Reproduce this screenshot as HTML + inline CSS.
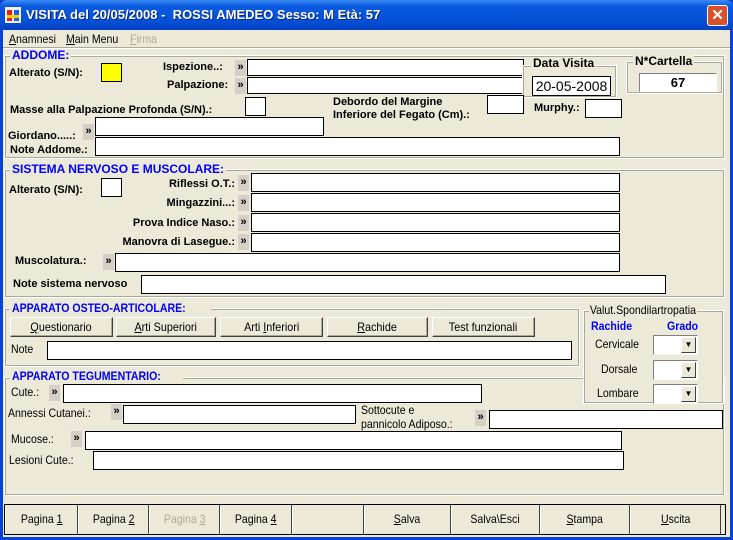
<!DOCTYPE html>
<html><head><meta charset="utf-8"><style>
*{box-sizing:border-box;margin:0;padding:0}
body{width:733px;height:540px;background:#0842d8;position:relative;overflow:hidden;font-family:"Liberation Sans",Arial,sans-serif}
#title{position:absolute;left:0;top:0;width:733px;height:30px;background:linear-gradient(#3b8cf5,#0a5ae0 20%,#0550d8 70%,#0340c0);border-radius:7px 7px 0 0}
#title span{position:absolute;left:26px;top:7px;color:#fff;font-weight:bold;font-size:13px;text-shadow:1px 1px #0a2a80}
#close{position:absolute;left:707px;top:5px;width:21px;height:21px;background:#d8502c;border:1px solid #fff;border-radius:3px;color:#fff;font-size:15px;font-weight:bold;text-align:center;line-height:19px}
#client{position:absolute;left:3px;top:30px;width:727px;height:507px;background:#ece9d8}
.a{position:absolute}
.l{position:absolute;font-size:11px;font-weight:bold;color:#000;white-space:nowrap;line-height:13px}
.n{position:absolute;font-size:12px;color:#000;white-space:nowrap;line-height:14px;transform:scaleX(.88);transform-origin:left}
.r{text-align:right}
.i{position:absolute;background:#fff;border:1px solid #000;height:18px}
.ar{position:absolute;width:11px;height:16px;background:#d4d0c8;font-size:11px;font-weight:bold;line-height:15px;text-align:center}
.g{position:absolute;border:1px solid #fff;outline:1px solid #aca899;outline-offset:-2px}
.gt{position:absolute;font-size:12px;font-weight:bold;color:#0000ff;background:#ece9d8;padding:0 2px;line-height:13px;white-space:nowrap}
.b{position:absolute;height:20px;background:#ece9d8;border:1px solid;border-color:#fff #404040 #404040 #fff;box-shadow:inset -1px -1px #aca899;font-size:12px;text-align:center;line-height:18px}
.b span{display:inline-block;transform:scaleX(.9)}
.pb{position:absolute;top:475px;height:29px;border-right:1px solid #404040;border-left:1px solid #fff;font-size:12px;text-align:center;line-height:28px}
.pb span{display:inline-block;transform:scaleX(.88)}
.cb{position:absolute;width:45px;height:20px;background:#fff;border:1px solid;border-color:#808080 #fff #fff #808080;z-index:3}
.cb i{position:absolute;right:1px;top:1px;width:15px;height:16px;background:#ece9d8;border:1px solid;border-color:#fff #404040 #404040 #fff;font-style:normal;font-size:8px;text-align:center;line-height:14px}
.z{z-index:3}
</style></head><body>
<div id="title"><svg class="a" style="left:5px;top:7px" width="16" height="16"><rect width="16" height="16" fill="#eee"/><rect x="2" y="3" width="5" height="11" fill="#e02020"/><rect x="9" y="3" width="5" height="11" fill="#2060e0"/><rect x="2" y="8" width="12" height="3" fill="#f0d000"/></svg><span>VISITA del 20/05/2008 -&nbsp; ROSSI AMEDEO Sesso: M Età: 57</span><div id="close">✕</div></div>
<div id="client">
<div class="n" style="left:6px;top:2px"><u>A</u>namnesi</div>
<div class="n" style="left:63px;top:2px"><u>M</u>ain Menu</div>
<div class="n" style="left:127px;top:2px;color:#aca899"><u>F</u>irma</div>
<div class="a" style="left:0;top:17px;width:727px;height:2px;border-top:1px solid #aca899;border-bottom:1px solid #fff"></div>

<div class="g" style="left:1px;top:25px;width:721px;height:104px"></div>
<div class="gt" style="left:7px;top:19px">ADDOME:</div>
<div class="l" style="left:6px;top:37px">Alterato (S/N):</div>
<div class="i" style="left:98px;top:33px;width:21px;height:19px;background:#ffff00"></div>
<div class="l" style="left:160px;top:31px">Ispezione..:</div><div class="ar" style="left:232px;top:30px">»</div><div class="i" style="left:244px;top:29px;width:277px;height:17px"></div>
<div class="l" style="left:164px;top:49px">Palpazione:</div><div class="ar" style="left:232px;top:48px">»</div><div class="i" style="left:244px;top:47px;width:277px;height:17px"></div>
<div class="g" style="left:519px;top:35px;width:95px;height:33px"></div><div class="l" style="left:528px;top:27px;font-size:12px;background:#ece9d8;padding:0 2px">Data Visita</div>
<div class="i" style="left:529px;top:46px;width:79px;height:20px;font-size:14px;line-height:18px;text-align:center">20-05-2008</div>
<div class="g" style="left:623px;top:31px;width:97px;height:33px"></div><div class="l" style="left:630px;top:25px;font-size:12px;background:#ece9d8;padding:0 2px">N*Cartella</div>
<div class="a" style="left:636px;top:43px;width:78px;height:19px;background:#fff;border:1px solid;border-color:#808080 #fff #fff #808080;font-size:13px;font-weight:bold;text-align:center;line-height:17px">67</div>
<div class="l" style="left:7px;top:74px">Masse alla Palpazione Profonda (S/N).:</div>
<div class="i" style="left:242px;top:67px;width:21px;height:19px"></div>
<div class="l" style="left:330px;top:66px">Debordo del Margine<br>Inferiore del Fegato (Cm).:</div>
<div class="i" style="left:484px;top:65px;width:37px;height:19px"></div>
<div class="l" style="left:531px;top:72px">Murphy.:</div><div class="i" style="left:582px;top:69px;width:37px;height:19px"></div>
<div class="l" style="left:5px;top:100px">Giordano.....:</div><div class="ar" style="left:80px;top:94px">»</div><div class="i" style="left:92px;top:87px;width:229px;height:19px"></div>
<div class="l" style="left:7px;top:114px">Note Addome.:</div><div class="i" style="left:92px;top:107px;width:525px;height:19px"></div>

<div class="g" style="left:1px;top:139px;width:721px;height:129px"></div>
<div class="gt" style="left:7px;top:133px">SISTEMA NERVOSO E MUSCOLARE:</div>
<div class="l" style="left:6px;top:154px">Alterato (S/N):</div><div class="i" style="left:98px;top:148px;width:21px;height:19px"></div>
<div class="l r" style="left:100px;width:132px;top:148px">Riflessi O.T.:</div><div class="ar" style="left:235px;top:145px">»</div><div class="i" style="left:248px;top:143px;width:369px;height:19px"></div>
<div class="l r" style="left:100px;width:132px;top:167px">Mingazzini...:</div><div class="ar" style="left:235px;top:165px">»</div><div class="i" style="left:248px;top:163px;width:369px;height:19px"></div>
<div class="l r" style="left:90px;width:142px;top:187px">Prova Indice Naso.:</div><div class="ar" style="left:235px;top:185px">»</div><div class="i" style="left:248px;top:183px;width:369px;height:19px"></div>
<div class="l r" style="left:90px;width:142px;top:206px">Manovra di Lasegue.:</div><div class="ar" style="left:235px;top:204px">»</div><div class="i" style="left:248px;top:203px;width:369px;height:19px"></div>
<div class="l" style="left:12px;top:225px">Muscolatura.:</div><div class="ar" style="left:100px;top:224px">»</div><div class="i" style="left:112px;top:223px;width:505px;height:19px"></div>
<div class="l" style="left:10px;top:248px">Note sistema nervoso</div><div class="i" style="left:138px;top:245px;width:525px;height:19px"></div>

<div class="g" style="left:1px;top:278px;width:576px;height:59px"></div>
<div class="gt" style="left:7px;top:272px"><span style="display:inline-block;transform:scaleX(.88);transform-origin:left">APPARATO OSTEO-ARTICOLARE:</span></div>
<div class="b" style="left:7px;top:287px;width:103px"><span><u>Q</u>uestionario</span></div>
<div class="b" style="left:113px;top:287px;width:100px"><span><u>A</u>rti Superiori</span></div>
<div class="b" style="left:217px;top:287px;width:103px"><span>Arti <u>I</u>nferiori</span></div>
<div class="b" style="left:324px;top:287px;width:101px"><span><u>R</u>achide</span></div>
<div class="b" style="left:429px;top:287px;width:103px"><span>Test funzionali</span></div>
<div class="n" style="left:8px;top:312px">Note</div><div class="i" style="left:44px;top:311px;width:525px;height:19px"></div>

<div class="g" style="left:1px;top:347px;width:721px;height:119px"></div>
<div class="gt" style="left:7px;top:340px"><span style="display:inline-block;transform:scaleX(.88);transform-origin:left">APPARATO TEGUMENTARIO:</span></div>
<div class="n" style="left:8px;top:355px">Cute.:</div><div class="ar" style="left:46px;top:355px">»</div><div class="i" style="left:60px;top:354px;width:419px;height:19px"></div>
<div class="n" style="left:5px;top:376px">Annessi Cutanei.:</div><div class="ar" style="left:108px;top:374px">»</div><div class="i" style="left:120px;top:375px;width:233px;height:19px"></div>
<div class="n" style="left:358px;top:373px;line-height:14px">Sottocute e<br>pannicolo Adiposo.:</div><div class="ar" style="left:472px;top:380px">»</div><div class="i" style="left:486px;top:380px;width:234px;height:19px"></div>
<div class="n" style="left:8px;top:402px">Mucose.:</div><div class="ar" style="left:68px;top:401px">»</div><div class="i" style="left:82px;top:401px;width:537px;height:19px"></div>
<div class="n" style="left:6px;top:423px">Lesioni Cute.:</div><div class="i" style="left:90px;top:421px;width:531px;height:19px"></div>

<div class="g z" style="left:580px;top:280px;width:141px;height:94px;background:#ece9d8"></div>
<div class="n z" style="left:586px;top:273px;background:#ece9d8;padding:0 1px">Valut.Spondilartropatia</div>
<div class="n z" style="left:588px;top:289px;color:#0000ff;font-weight:bold;font-size:12px">Rachide</div>
<div class="n z" style="left:664px;top:289px;color:#0000ff;font-weight:bold;font-size:12px">Grado</div>
<div class="n z" style="left:592px;top:307px">Cervicale</div><div class="cb" style="left:650px;top:305px"><i>▼</i></div>
<div class="n z" style="left:598px;top:332px">Dorsale</div><div class="cb" style="left:650px;top:330px"><i>▼</i></div>
<div class="n z" style="left:594px;top:356px">Lombare</div><div class="cb" style="left:650px;top:354px"><i>▼</i></div>

<div class="a" style="left:1px;top:474px;width:722px;height:31px;border:1px solid #000;background:#ece9d8"></div>
<div class="pb" style="left:2px;width:73px"><span>Pagina <u>1</u></span></div>
<div class="pb" style="left:75px;width:71px"><span>Pagina <u>2</u></span></div>
<div class="pb" style="left:146px;width:71px;color:#aca899"><span>Pagina <u>3</u></span></div>
<div class="pb" style="left:217px;width:72px"><span>Pagina <u>4</u></span></div>
<div class="pb" style="left:289px;width:72px"></div>
<div class="pb" style="left:361px;width:87px"><span><u>S</u>alva</span></div>
<div class="pb" style="left:448px;width:89px"><span>Salva\Esci</span></div>
<div class="pb" style="left:537px;width:90px"><span><u>S</u>tampa</span></div>
<div class="pb" style="left:627px;width:91px"><span><u>U</u>scita</span></div>
</div>
</body></html>
